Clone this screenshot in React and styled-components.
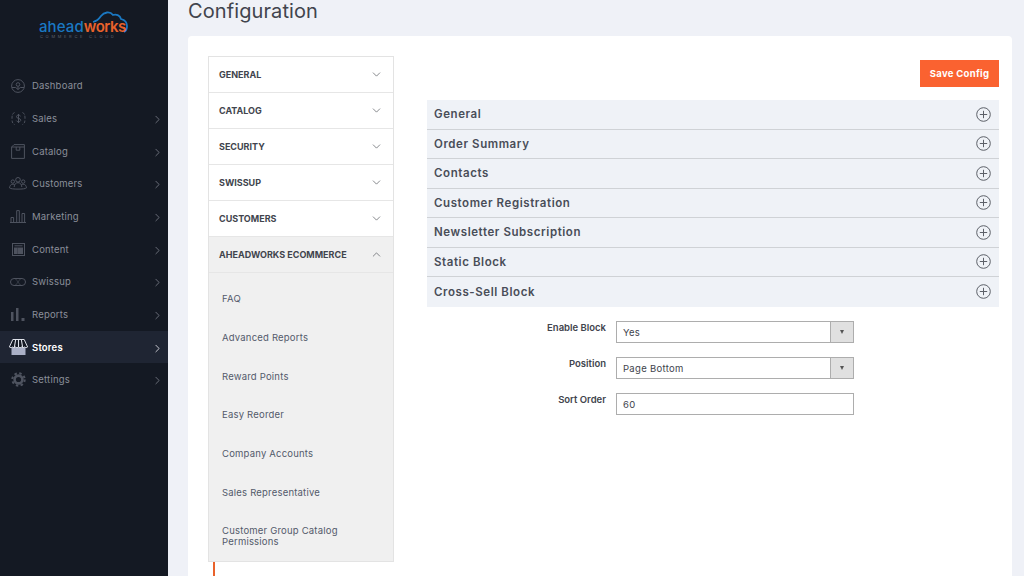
import React from "react";
import styled, { createGlobalStyle } from "styled-components";
import { ChevronRight, ChevronDown, ChevronUp } from "lucide-react";

const Global = createGlobalStyle`
  html, body { margin: 0; padding: 0; width: 1024px; height: 576px; overflow: hidden; background: #eff1f7; }
  * { box-sizing: border-box; }
  body { font-family: Inter, "Liberation Sans", sans-serif; }
`;
const Page = styled.div`display: flex; width: 1024px; height: 576px; overflow: hidden;`;
const Sidebar = styled.aside`width: 168px; flex: none; background: #141923; display: flex; flex-direction: column;`;
const LogoWrap = styled.div`height: 69.3px; position: relative; flex: none;`;
const LogoCloud = styled.svg`position: absolute; left: 88px; top: 10px;`;
const LogoText = styled.div`position: absolute; left: 39px; top: 21px; font-size: 15px; line-height: 12px; font-weight: 500; color: #1a78c2; letter-spacing: 0.1px;
  b { color: #e9622b; font-weight: 600; font-size: 15px; letter-spacing: -0.5px; }`;
const LogoSub = styled.div`position: absolute; left: 40px; top: 35px; font-size: 4px; line-height: 4px; letter-spacing: 2.7px; color: #5d626e; white-space: nowrap;`;
const NavList = styled.nav`display: flex; flex-direction: column;`;
const NavItem = styled.div`height: 32.7px; display: flex; align-items: center; padding: 0 4px 0 7px;
  color: ${p => p.$active ? "#ffffff" : "#8b8f9a"}; background: ${p => p.$active ? "#1f2533" : "transparent"};
  font-size: 9.5px; letter-spacing: 0.2px; font-weight: ${p => p.$active ? 600 : 400};`;
const NavIcon = styled.span`width: 22px; height: 20px; display: flex; align-items: center; justify-content: center; margin-right: 3px; flex: none; color: ${p => p.$active ? "#d5d8e2" : "#4e535f"};`;
const NavLabel = styled.span`flex: 1;`;
const NavArrow = styled(ChevronRight)`color: ${p => p.$active ? "#e8e8ee" : "#7a7e89"}; margin-top: 2px;`;
const Main = styled.main`flex: 1; padding: 0 12px 0 20px; display: flex; flex-direction: column; min-width: 0;`;
const Title = styled.h1`margin: 0; height: 36px; font-size: 20px; line-height: 23px; font-weight: 400; color: #41444d; letter-spacing: 0.1px; white-space: nowrap;`;
const Card = styled.section`flex: 1; background: #fff; border-radius: 4px 4px 0 0; padding: 20px 13px 0 20px; display: flex; gap: 33px; min-height: 0;`;
const TabCol = styled.div`width: 186px; flex: none; display: flex; flex-direction: column;`;
const TabBox = styled.div`border: 1px solid #e3e3e3;`;
const TabHead = styled.div`height: 36px; display: flex; align-items: center; justify-content: space-between; padding: 0 10px;
  font-size: 9px; font-weight: 700; color: #41444d; background: ${p => p.$open ? "#f0f0f0" : "#fff"}; border-bottom: 1px solid #e6e6e6; white-space: nowrap;`;
const TabChevron = styled.span`display: flex; color: #55585e;`;
const SubPanel = styled.div`background: #f0f0f0; padding: 7px 0 0 13px; height: 288px; display: flex; flex-direction: column;`;
const SubItem = styled.div`height: 38.75px; display: flex; align-items: center; font-size: 9.5px; line-height: 10.5px; letter-spacing: 0.2px; color: #535a6b; white-space: pre-line; flex: none;
  &:last-child { margin-top: 5px; }`;
const OrangeMark = styled.div`width: 2px; height: 15px; margin-left: 5px; background: #e9622b; flex: none;`;
const Right = styled.div`flex: 1; min-width: 0; display: flex; flex-direction: column;`;
const ActionRow = styled.div`display: flex; justify-content: flex-end; padding-top: 4px; height: 44px; flex: none;`;
const SaveBtn = styled.button`width: 79px; height: 27px; border: 0; background: #fa6230; color: #fff; font: 700 9.5px Inter, sans-serif; letter-spacing: 0.3px; padding: 0;`;
const Section = styled.div`height: 29.5px; background: #eff2f7; border-bottom: ${p => p.$last ? "0" : "1px solid #cfd2d6"}; display: flex; align-items: center; justify-content: space-between; padding: 0 8px 0 7px;
  font-size: 11.5px; font-weight: 600; color: #494d58; letter-spacing: 0.58px;`;
const PlusIcon = styled.svg`flex: none;`;
const Form = styled.div`padding-top: 14.700px; display: flex; flex-direction: column; gap: 15px;`;
const Field = styled.div`display: flex; align-items: flex-start; height: 21px;`;
const FieldLabel = styled.label`width: 189px; text-align: right; padding: 0.5px 10px 0 0; font-size: 9.5px; line-height: 11px; font-weight: 600; color: #41444d;`;
const Control = styled.div`width: 238px; height: 22px; border: 1px solid #adadad; display: flex; align-items: center; font-size: 9.5px; letter-spacing: 0.3px; color: #41444d; background: #fff; padding-left: 6px; position: relative;`;
const SelectArrow = styled.span`position: absolute; right: 0; top: 0; bottom: 0; width: 23px; background: #e0e0e0; border-left: 1px solid #adadad; display: flex; align-items: center; justify-content: center;
  &::after { content: ""; border-left: 2.5px solid transparent; border-right: 2.5px solid transparent; border-top: 4px solid #555; }`;

const s = { fill: "none", stroke: "currentColor", strokeWidth: 1 };
const icons = {
  dashboard: <svg width="14" height="14" viewBox="0 0 14 14" {...s}><circle cx="7" cy="7" r="6.400"/><circle cx="7" cy="5.500" r="1.800"/><path d="M1 8.500h3.700L7 10.500l2.300-2H13M7 7.500v3"/></svg>,
  sales: <svg width="15" height="15" viewBox="0 0 15 15" {...s}><path d="M3.500 1.500C1.500 2.500 1 4 1 7.500s.5 5 2.500 6M11.500 1.500c2 1 2.500 2.500 2.500 6s-.5 5-2.500 6" strokeDasharray="2.800 1.500"/><path d="M9.600 5.200C9.200 4.400 8.400 4.100 7.500 4.100c-1.200 0-2 .6-2 1.600 0 2.300 4.200 1 4.200 3.500 0 1-.9 1.600-2.200 1.600-.9 0-1.800-.4-2.200-1.200M7.500 3v9"/></svg>,
  catalog: <svg width="14" height="15" viewBox="0 0 14 15" {...s}><path d="M.6 3v11.400h12.800V.6H3zM.6 3h12.800M5.200 3v3.200h3.600V3"/></svg>,
  customers: <svg width="18" height="13" viewBox="0 0 18 13" {...s}><circle cx="9" cy="2.800" r="2.300"/><circle cx="3.800" cy="4.600" r="1.700"/><circle cx="14.200" cy="4.600" r="1.700"/><path d="M5.200 10c0-2.800 1.700-4.300 3.800-4.300s3.800 1.500 3.800 4.300M.6 11c0-2.300 1.200-3.700 3.200-3.700.6 0 1.200.2 1.700.5M17.400 11c0-2.300-1.200-3.700-3.200-3.700-.6 0-1.200.2-1.700.5M.6 11c1 1.500 15.800 1.500 16.800 0"/></svg>,
  marketing: <svg width="16" height="13" viewBox="0 0 16 13" {...s}><path d="M0 12.500h16M1 12.500V7.500h2.600v5M6.700 12.500V.6h2.600v11.900M12 12.500V3.500h2.600v9"/></svg>,
  content: <svg width="13" height="13" viewBox="0 0 13 13" {...s}><rect x=".5" y=".5" width="12" height="12"/><path d="M2.500 2.800h8"/><rect x="2.500" y="5" width="2.500" height="5.500" fill="currentColor"/><rect x="6" y="5" width="4.500" height="5.500" fill="currentColor"/></svg>,
  swissup: <svg width="16" height="8" viewBox="0 0 16 8" {...s}><rect x=".5" y=".5" width="15" height="7" rx="3.500"/><path d="M5 .8c2 0 2 3.200 3 3.200s1 3.200 3 3.200M11 .8c-2 0-2 3.200-3 3.200s-1 3.200-3 3.200" opacity=".55"/></svg>,
  reports: <svg width="14" height="13" viewBox="0 0 14 13" fill="currentColor"><rect x="0" y="4" width="2.500" height="9"/><rect x="5" y="0" width="2.500" height="13"/><rect x="10.500" y="10" width="3" height="3"/></svg>,
  stores: <svg width="19" height="16" viewBox="0 0 19 16"><path d="M2.500 7h14v9h-14z" fill="#aab0c6"/><path d="M3.800.5h11.400L18.600 8c-.6.800-2.500.8-3 0-.6.800-2.600.8-3.100 0-.6.800-2.500.8-3 0-.6.800-2.500.8-3 0-.6.800-2.600.8-3.100 0-.5.800-2.400.800-3 0z" fill="#141923" stroke="#dfe2ea" strokeWidth="1"/><path d="M6.600 1 5.400 8M9.500 1v7M12.400 1l1.200 7" stroke="#dfe2ea" strokeWidth="1.100" fill="none"/></svg>,
  settings: <svg width="15" height="15" viewBox="0 0 15 15" fill="none" stroke="currentColor"><circle cx="7.500" cy="7.500" r="6.200" strokeWidth="2" strokeDasharray="2.430 2.440"/><circle cx="7.500" cy="7.500" r="3.900" strokeWidth="2.600"/></svg>,
};
const nav = [
  ["Dashboard", "dashboard"], ["Sales", "sales", 1], ["Catalog", "catalog", 1], ["Customers", "customers", 1],
  ["Marketing", "marketing", 1], ["Content", "content", 1], ["Swissup", "swissup", 1], ["Reports", "reports", 1],
  ["Stores", "stores", 1, 1], ["Settings", "settings", 1],
];
const tabs = ["GENERAL", "CATALOG", "SECURITY", "SWISSUP", "CUSTOMERS"];
const subs = ["FAQ", "Advanced Reports", "Reward Points", "Easy Reorder", "Company Accounts", "Sales Representative", "Customer Group Catalog\nPermissions"];
const sections = ["General", "Order Summary", "Contacts", "Customer Registration", "Newsletter Subscription", "Static Block", "Cross-Sell Block"];

const Plus = () => (
  <PlusIcon width="15" height="15" viewBox="0 0 15 15" fill="none" stroke="#5c6068" strokeWidth="1">
    <circle cx="7.500" cy="7.500" r="6.800"/><path d="M3.800 7.500h7.400M7.500 3.800v7.400"/>
  </PlusIcon>
);

export default function App() {
  return (
    <Page>
      <Global />
      <Sidebar>
        <LogoWrap>
          <LogoCloud width="44" height="26" viewBox="0 0 44 26" fill="none" stroke="#1a78c2" strokeWidth="1.800">
            <path d="M5 12C9 11 11 9 13 6 16 2 22 1 25 5 28 4 32 5 33 9 37 10 39 13 39 16 39 19 38 21 36 22"/>
          </LogoCloud>
          <LogoText>ahead<b>works</b></LogoText>
          <LogoSub>COMMERCE CLOUD</LogoSub>
        </LogoWrap>
        <NavList>
          {nav.map(([label, icon, arrow, active]) => (
            <NavItem key={label} $active={active}>
              <NavIcon $active={active}>{icons[icon]}</NavIcon>
              <NavLabel>{label}</NavLabel>
              {arrow && <NavArrow $active={active} size={13} strokeWidth={1.5} />}
            </NavItem>
          ))}
        </NavList>
      </Sidebar>
      <Main>
        <Title>Configuration</Title>
        <Card>
          <TabCol>
            <TabBox>
              {tabs.map(t => (
                <TabHead key={t}>{t}<TabChevron><ChevronDown size={13} strokeWidth={1.3} /></TabChevron></TabHead>
              ))}
              <TabHead $open>AHEADWORKS ECOMMERCE<TabChevron><ChevronUp size={13} strokeWidth={1.3} /></TabChevron></TabHead>
              <SubPanel>
                {subs.map(x => <SubItem key={x}>{x}</SubItem>)}
              </SubPanel>
            </TabBox>
            <OrangeMark />
          </TabCol>
          <Right>
            <ActionRow><SaveBtn>Save Config</SaveBtn></ActionRow>
            {sections.map((x, i) => <Section key={x} $last={i === sections.length - 1}>{x}<Plus /></Section>)}
            <Form>
              <Field><FieldLabel>Enable Block</FieldLabel><Control>Yes<SelectArrow /></Control></Field>
              <Field><FieldLabel>Position</FieldLabel><Control>Page Bottom<SelectArrow /></Control></Field>
              <Field><FieldLabel>Sort Order</FieldLabel><Control>60</Control></Field>
            </Form>
          </Right>
        </Card>
      </Main>
    </Page>
  );
}
